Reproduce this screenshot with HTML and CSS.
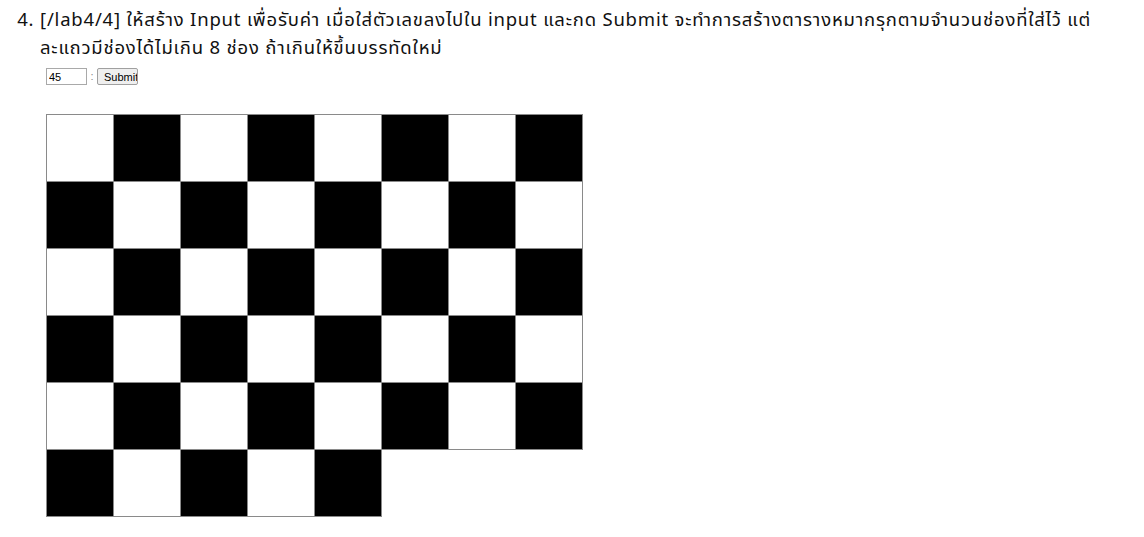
FILE: index.html
```html
<!DOCTYPE html>
<html lang="th">
<head>
<meta charset="utf-8">
<title>lab4/4</title>
<link rel="stylesheet" href="styles.css">
</head>
<body>
<ol class="tasks" start="4">
  <li class="task">
    <p class="task-title">[/lab4/4] ให้สร้าง Input เพื่อรับค่า เมื่อใส่ตัวเลขลงไปใน input และกด Submit จะทำการสร้างตารางหมากรุกตามจำนวนช่องที่ใส่ไว้ แต่<wbr>ละแถวมีช่องได้ไม่เกิน 8 ช่อง ถ้าเกินให้ขึ้นบรรทัดใหม่</p>
    <div class="task-body">
      <form class="board-form">
        <input class="num-input" type="text" value="45">
        <span class="sep">:</span>
        <button class="submit-btn" type="button">Submit</button>
      </form>
      <table class="board">
        <tr><td class="w"></td><td class="b"></td><td class="w"></td><td class="b"></td><td class="w"></td><td class="b"></td><td class="w"></td><td class="b"></td></tr>
        <tr><td class="b"></td><td class="w"></td><td class="b"></td><td class="w"></td><td class="b"></td><td class="w"></td><td class="b"></td><td class="w"></td></tr>
        <tr><td class="w"></td><td class="b"></td><td class="w"></td><td class="b"></td><td class="w"></td><td class="b"></td><td class="w"></td><td class="b"></td></tr>
        <tr><td class="b"></td><td class="w"></td><td class="b"></td><td class="w"></td><td class="b"></td><td class="w"></td><td class="b"></td><td class="w"></td></tr>
        <tr><td class="w"></td><td class="b"></td><td class="w"></td><td class="b"></td><td class="w"></td><td class="b"></td><td class="w"></td><td class="b"></td></tr>
        <tr><td class="b"></td><td class="w"></td><td class="b"></td><td class="w"></td><td class="b"></td></tr>
      </table>
    </div>
  </li>
</ol>
</body>
</html>
```

FILE: styles.css
```css
html, body {
  margin: 0;
  padding: 0;
  background: #fff;
}

body {
  font-family: "Noto Sans Thai", "Noto Sans", "DejaVu Sans", sans-serif;
  color: #111;
}

.tasks {
  margin: 0;
  padding: 6px 44px 0 40px;
  font-size: 18.5px;
  line-height: 28px;
  letter-spacing: 0.8px;
}

.task-title {
  margin: 0;
}

.task-body {
  padding: 6px 0 0 6px;
  letter-spacing: 0;
}

.board-form {
  display: flex;
  align-items: center;
  height: 17px;
  margin: 0 0 29px 0;
  font-family: "Liberation Sans", Arial, sans-serif;
  font-size: 11px;
  line-height: 13px;
}

.num-input {
  box-sizing: border-box;
  width: 41px;
  height: 17px;
  margin: 0;
  padding: 0 2px;
  border: 1px solid #a9a9a9;
  font-family: "Liberation Sans", Arial, sans-serif;
  font-size: 11px;
  color: #000;
}

.sep {
  width: 10px;
  text-align: center;
  color: #888;
}

.submit-btn {
  box-sizing: border-box;
  width: 41px;
  height: 17px;
  margin: 0;
  padding: 0 0 0 6px;
  overflow: hidden;
  white-space: nowrap;
  text-align: left;
  border: 1px solid #a0a0a0;
  border-radius: 2px;
  background: #efefef;
  font-family: "Liberation Sans", Arial, sans-serif;
  font-size: 11px;
  color: #000;
}

.board {
  border-collapse: collapse;
}

.board td {
  width: 66px;
  height: 66px;
  padding: 0;
  border: 1px solid #8a8a8a;
  box-sizing: content-box;
}

.board .b {
  background: #000;
}

.board .w {
  background: #fff;
}
```
